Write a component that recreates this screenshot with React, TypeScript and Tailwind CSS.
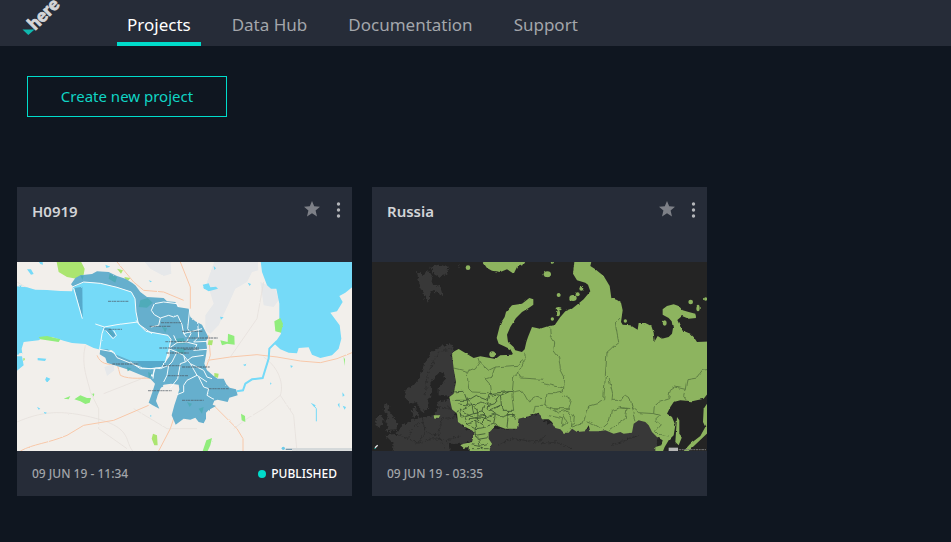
import type { ReactNode } from "react";

type Project = {
  name: string;
  date: string;
  published: boolean;
  map: ReactNode;
};

const navItems = ["Projects", "Data Hub", "Documentation", "Support"];

function Logo() {
  return (
    <svg viewBox="0 0 44 36" className="h-9 w-11 overflow-visible" role="img" aria-label="here">
      <text
        x="15"
        y="31"
        transform="rotate(-45 15 31)"
        fill="#d4d5d7"
        stroke="#d4d5d7"
        strokeWidth="0.8"
        fontSize="18"
        fontWeight="900"
        fontFamily="Lato, sans-serif"
      >
        here
      </text>
      <path d="M2.5 29.5H14.5L8.3 35Z" fill="#10b8ae" />
    </svg>
  );
}

function CityMap() {
  return (
    <svg viewBox="0 0 1005 567" className="block w-full" role="img" aria-label="Map of city districts">
      <defs>
        <filter id="coast" x="0" y="0" width="100%" height="100%">
          <feTurbulence type="fractalNoise" baseFrequency="0.06" numOctaves="2" seed="4" />
          <feDisplacementMap in="SourceGraphic" scale="5" xChannelSelector="R" yChannelSelector="G" />
        </filter>
      </defs>
      <rect width="1005" height="567" fill="#f2efeb" />
      <g filter="url(#coast)">
        <path d="M595 -10H722L724 25 705 30 690 60 655 80 635 125 605 190 580 215 565 205 565 160 590 125 570 60ZM730 60 775 80 785 115 770 135 740 130ZM375 -10H460L463 35 440 42 400 20ZM262 315 290 305 292 325 270 342Z" fill="#e6e8ea" />
        <g fill="none" stroke="#e4deda" strokeWidth="2">
          <path d="M0 480C70 450 130 440 240 470S320 540 350 570M205 250C190 310 215 360 220 390L245 440V500L330 560M0 60 120 130M850 0 800 170M740 285C790 320 800 370 790 400L740 440 690 470 650 500M790 400 830 460 840 570M640 285 720 170 740 60M350 440 450 500 540 500M260 395 400 340" />
        </g>
        <g fill="none" stroke="#f8c8a9" strokeWidth="3">
          <path d="M10 567C50 545 90 545 150 520L200 490 290 475 395 430M240 280C250 305 270 310 300 305L310 340C340 355 380 345 415 350M300 0 350 60 380 85 440 90 500 115M490 0 520 75V140M575 220 580 280 568 315M572 295 640 285 720 278 780 285 850 297 910 302 960 290 1005 272M590 430 660 500 678 530V570M480 440 460 500 425 567" />
        </g>
        <g fill="#75daf8">
          <path d="M-10 72 30 76 55 83 90 84 130 87 165 88 168 74 200 60 250 64 300 76 343 90 354 110 357 150 364 185 387 208 453 220 460 232 456 262 445 300 434 316 400 320 376 318 340 305 300 287 285 265 245 262 230 258 205 246 165 243 140 236 105 225 75 228 65 235 20 240 14 260 16 275-10 280ZM-10 283 15 283 20 310-10 334Z" />
          <path d="M730-10 735 30 750 70 762 80 778 80 787 125 787 175 792 215 772 245 790 262 815 272 840 274 845 258 875 256 885 278 910 288 945 280 965 260 973 230 968 190 940 152 960 148 977 120 967 102 985 92 1015 68V-10Z" />
          <path d="M30 22 42 22 50 36 42 38ZM62 288 88 290 84 297 62 295ZM88 345 100 350 94 358 84 355ZM60 434 70 440 65 443ZM80 449 90 452 84 456ZM62-5 76-5 78 8 70 6ZM557 68 575 64 580 76 597 74 603 80 575 88 562 80ZM395 55 405 58 400 61ZM590 12 597 19 592 24ZM609 164 620 166 612 173ZM692 62 702 66 698 72ZM678 308 690 305 684 313ZM820 310 828 312 822 318ZM759 361 764 365 760 368ZM976 391 983 400 977 404ZM962 428 967 422 968 438ZM977 431 987 435 983 443ZM881 422 896 430 892 436ZM265 8 280 14 268 18ZM400 458 404 462 400 465Z" />
        </g>
        <path d="M780 237 757 260 755 290 744 325 737 348 705 352 685 365 678 385 660 388" fill="none" stroke="#75daf8" strokeWidth="6" />
        <path d="M890 430 898 440V478" fill="none" stroke="#75daf8" strokeWidth="3" />
        <g fill="#abe56f">
          <path d="M118-5H190L203 20 200 38 178 50 150 45 125 30ZM300 20 318 25 312 35ZM322 45 340 48 330 60ZM408 515 420 520 422 550 412 550 404 530ZM575 235 588 235 585 250 572 248ZM592 333 605 335 603 347 592 345ZM18 288 24 292 20 298Z" />
        </g>
        <g fill="#91ed7c">
          <path d="M65 225 90 222 130 232 125 240 70 232ZM172 412 190 400 210 408 222 408 218 422 205 426 190 418ZM224 393 232 395 230 404ZM140 410 160 402 155 412ZM610 235 632 240 633 215 652 222 653 248 630 245 615 250ZM772 178 790 168 798 185 792 212 775 208ZM672 455 684 462 685 480 674 475ZM568 535 585 528 580 550 572 567H557ZM980 285 984 292 982 312Z" />
        </g>
      </g>
      <g filter="url(#coast)">
        <path
          d="M162 67 175 48 190 40 225 36 240 28 275 30 300 42 325 50 345 62 355 70 370 90 390 105 440 108 450 118 475 120 482 135 515 140 520 165 535 178 555 188 565 208 574 225 567 238 570 258 567 280 562 305 570 325 590 342 602 350 620 350 628 367 638 377 657 382 662 400 637 407 632 420 602 413 592 416 587 428 597 432 575 444 567 452 567 470 560 484 545 480 535 467 520 473 500 470 476 488 464 460 472 430 482 400 487 382 485 368 462 365 440 368 430 380 422 400 417 417 427 440 407 430 395 422 407 388 414 365 400 350 370 338 330 322 300 312 270 302 265 287 248 277 250 262 272 262 292 276 342 296 360 297 443 297 435 315 458 282 460 232 453 220 387 208 364 185 357 150 354 110 343 90 300 76 250 64 200 60 170 76Z"
          fill="#66afcd"
        />
        <path d="M171 78 196 74 197 170ZM360 297H443L434 316 400 320 376 316ZM255 195 282 200 297 220 290 228 270 212Z" fill="#56a9cb" />
        <path d="M370 115 392 108 407 122 390 137 365 135ZM278 35 300 45 295 62 275 50ZM435 195 450 198 445 212ZM475 230 500 228 505 245 475 244ZM478 260 505 258 500 275 480 272ZM275 203 290 218 280 216ZM190 40 200 42 196 54ZM510 420 525 425 518 435ZM545 440 560 435 555 455ZM330 315 344 320 332 328ZM393 330 404 335 396 350Z" fill="#50abb9" />
        <g fill="none" stroke="#f4fbfc" strokeWidth="3" strokeLinejoin="round">
          <path d="M168 74 200 60 250 64 300 76 343 90 354 110 357 150 364 185 387 208 453 220 462 232 456 262 445 300 434 316 400 320 376 318 342 304 300 287 290 270 248 262 255 215 262 195 235 186M262 195 300 188 362 180M170 78 196 170M290 205 298 220 288 230 266 205" />
          <path d="M485 135 480 125 440 120 412 125 403 145 412 158 430 168 455 160 470 165 482 160 495 188 500 215 508 225M430 168 425 190 402 195M357 175 370 190 405 215M518 142 512 200 522 215 508 240 480 242 470 220M542 180 545 225 530 240 570 238M508 240 540 248 530 265 570 262M480 242 455 260 480 270 500 280 505 300 490 305 482 350 460 378M500 280 520 305 540 340 570 360M480 270 465 300 455 310 450 340 440 360M455 310 430 320 415 318 405 345M540 340 510 355 500 370 500 390 480 398M545 345 560 375 575 380 570 400 590 412M520 305 560 325 570 345 585 350M500 215 555 200M505 300 525 285 560 280M412 318 408 350M340 300 370 320 412 320" />
        </g>
      </g>
      <g stroke="#4b5661" strokeOpacity="0.55" strokeWidth="4" strokeDasharray="9 2 5 1 7 2">
        <path d="M273 118H334M275 202H315M286 306H365M432 182H495M398 193H462M445 239H515M427 258H545M448 273H515M438 311H492M452 341H515M393 386H464M495 208H558M512 228H603M495 315H578M575 380H635M495 415H560M500 262H545" />
      </g>
      <path d="M825 562H1005" stroke="#d5d9da" strokeWidth="8" />
      <circle cx="799" cy="559" r="5" fill="#6cc9e8" />
      <path d="M806 562H825" stroke="#7799ad" strokeWidth="4" />
    </svg>
  );
}

function CountryMap() {
  return (
    <svg viewBox="0 0 1005 567" className="block w-full" role="img" aria-label="Map of Russian regions">
      <defs>
        <filter id="shore" x="0" y="0" width="100%" height="100%">
          <feTurbulence type="fractalNoise" baseFrequency="0.06" numOctaves="2" seed="9" />
          <feDisplacementMap in="SourceGraphic" scale="7" xChannelSelector="R" yChannelSelector="G" />
        </filter>
        <filter id="border" x="0" y="0" width="100%" height="100%">
          <feTurbulence type="fractalNoise" baseFrequency="0.05" numOctaves="1" seed="5" />
          <feDisplacementMap in="SourceGraphic" scale="16" xChannelSelector="R" yChannelSelector="G" />
        </filter>
        <filter id="fjord" x="0" y="0" width="100%" height="100%">
          <feTurbulence type="fractalNoise" baseFrequency="0.12" numOctaves="2" seed="2" />
          <feDisplacementMap in="SourceGraphic" scale="16" xChannelSelector="R" yChannelSelector="G" />
        </filter>
      </defs>
      <rect width="1005" height="567" fill="#242424" />
      <g fill="#393939" filter="url(#fjord)">
        <path d="M135 30 155 40 170 25 182 45 178 65 205 75 212 100 190 90 178 85 168 122 155 100 145 75ZM175 15 200 8 230 15 225 35 200 45 185 35ZM258 12 266 10 262 18Z" />
        <path d="M245 250 225 245 200 258 175 275 155 310 145 345 125 370 100 385 102 410 120 425 135 420 150 450 168 440 170 415 180 390 175 365 195 335 215 330 220 350 200 380 200 400 235 405 250 380 250 340 240 290Z" />
        <path d="M38 425 52 430 50 445 65 465 78 490 72 505 42 508 50 495 40 480 48 465 35 445ZM12 465 30 460 35 480 22 495 10 490ZM118 435 132 435 138 460 125 465Z" />
        <path d="M60 580 65 545 40 520 75 515 90 490 120 475 150 465 185 460 200 440 195 420 235 410 250 460 280 500 310 510 305 535 270 545 230 545 235 580ZM345 520 360 500 430 500 440 470 500 455 520 480 560 495 700 500 800 470 860 500 850 580H345ZM140 550 160 545 200 560V580H145Z" />
      </g>
      <g fill="none" stroke="#292929" strokeWidth="2" filter="url(#fjord)">
        <path d="M160 400 165 340 200 270 240 260M75 515 110 530 120 500 150 480M110 530 140 545 180 530 220 535 270 520M150 465 160 510 200 520 210 470 250 465M160 510 140 545M200 520 220 560M380 550 420 530 500 540 520 520M510 545 550 540 600 560M720 550 800 520" />
        <path d="M200 435 250 440" />
      </g>
      <g filter="url(#shore)">
        <g fill="#8db45e">
          <path d="M240 278 247 268 260 261 275 270 305 288 325 283 350 287 370 291 385 280 420 278 430 265 450 270 458 262 463 240 468 225 480 195 504 200 530 192 548 190 565 165 580 148 600 140 615 128 635 112 655 88 648 68 640 62 615 55 603 35 606 10 608-10H660L655 12 670 22 695 42 713 72 718 108 735 114 747 122 752 145 747 180 752 188 775 190 797 203 800 183 820 183 838 192 845 212 848 238 857 222 870 230 890 225 900 215 903 198 899 178 890 168 872 158 872 142 885 132 905 127 920 132 932 145 950 150 970 155 972 168 950 170 930 162 916 174 930 205 955 215 965 225 975 240 1015 238V385L995 410 960 418 925 415 905 420 895 435 885 455 900 465 910 490 905 520 890 535 878 555 870 575H850L850 555 868 550 872 535 855 525 840 510 830 490 820 480 800 475 785 485 780 512 755 515 745 510 725 515 700 505 680 508 655 508 650 490 640 508 615 510 600 500 590 512 575 512 565 502 550 498 540 480 530 472 510 472 500 452 470 463 440 470 435 500 400 500 370 490 350 510 350 530 360 545 353 560 355 580H290L290 555 275 558 265 550 275 545 300 540 308 510 275 492 258 480 255 455 240 442 232 405 245 395 252 360 245 320Z" />
          <path d="M325-10H465L455 8 435 15 425 35 405 22 385 30 360 26 345 18ZM472 108 484 112 484 128 470 138 450 150 432 168 415 195 405 218 408 240 425 255 432 270 425 280 415 262 395 252 380 245 374 228 385 185 398 165 402 150 420 130 450 125ZM185 460 205 460 200 468 186 466Z" />
          <path d="M915 465 922 475 922 515 930 525 920 550 910 540ZM1005 425 995 440 993 480 1000 495 985 522 955 545 935 567 950 567 1010 510Z" />
        </g>
        <g fill="#8db45e">
          <circle cx="288" cy="17" r="7" /><circle cx="361" cy="277" r="9" /><ellipse cx="526" cy="37" rx="11" ry="9" />
          <circle cx="560" cy="99" r="6" /><ellipse cx="603" cy="108" rx="11" ry="9" /><circle cx="617" cy="97" r="6" /><circle cx="628" cy="80" r="6" />
          <ellipse cx="558" cy="153" rx="6" ry="10" /><ellipse cx="560" cy="140" rx="9" ry="5" /><circle cx="541" cy="171" r="5" /><circle cx="760" cy="177" r="5" />
          <ellipse cx="878" cy="183" rx="6" ry="8" /><circle cx="956" cy="120" r="7" /><ellipse cx="978" cy="138" rx="5" ry="10" /><circle cx="1001" cy="111" r="5" /><circle cx="541" cy="0" r="5" />
        </g>
      </g>
      <g fill="none" stroke="#55743f" strokeWidth="2.5" strokeLinejoin="round" filter="url(#border)">
        <path d="M245 318 285 328 310 318 322 300 318 288M322 300 350 325 370 315 435 310 460 290 458 270M285 328 290 380 300 390 350 392M370 315 360 345 342 350 355 365 360 400M460 290 440 330 425 345 420 400 425 445M440 330 445 348 510 352M504 362 530 368 575 378M533 195 535 220 548 240 545 265 560 285 565 320 578 345 574 390M744 165 730 180 735 215 740 240 705 270 700 340 712 352 722 395 720 415 740 415 760 400 775 410 780 435 800 452 848 455 850 430 865 418 890 410 895 385 910 375 940 382 945 350 975 345 990 325 1010 322M940 382 935 400 945 415M780 435 792 475M700 345 695 410 675 425 650 432 640 470 630 485 600 495M640 475 665 485 690 500 712 480 718 445 745 437 775 440M745 437 765 440 760 470 730 490 712 503M848 455 865 460 850 475 865 488 850 505 865 520 890 525M574 390 550 395 525 395 518 430 545 440 590 440 598 415 574 400M518 430 490 430 485 455M545 440 560 450 582 445 598 465 595 500M574 460 585 480 570 490M525 460 575 470 570 495M598 458 610 465 608 485 595 490M425 390 450 385 470 420 490 405 510 410" />
        <path
          stroke="#3b5331"
          d="M238 390 275 388 285 415 310 400 350 415 355 395 385 400 390 445M240 415 285 415 280 440 250 450M285 415 300 430 330 420 350 430 365 425 380 405M280 440 300 430 305 455 275 465 262 455M305 455 330 450 335 430M330 450 345 465 370 455 390 465 420 455 430 470M275 465 285 485 310 475 325 485 345 465M310 475 315 500 340 495 325 485M340 495 370 485 385 495M285 485 315 500M350 415 345 440 370 455M300 430 315 440 320 475M350 445 385 430M370 455 365 485M410 445 405 495M275 450 300 465 340 460M290 470 330 465 360 475M355 395 420 388M360 400 375 420M310 520 340 515M312 505 315 535 345 530M300 545 325 550 350 545M320 535 330 565M300 560 350 560M385 400 410 390M410 460 425 455 420 465M255 425 290 430M265 440 270 470M390 445 425 445M385 430 370 440"
        />
      </g>
      <path d="M9 557 17 550" stroke="#eee" strokeWidth="4" />
      <path d="M6 558 12 558 9 562Z" fill="#10b8ae" />
      <rect x="890" y="557" width="28" height="10" fill="#b6b6b6" />
      <path d="M920 563H1002" stroke="#777" strokeWidth="3" strokeDasharray="8 2 5 2" />
    </svg>
  );
}

const projects: Project[] = [
  { name: "H0919", date: "09 JUN 19 - 11:34", published: true, map: <CityMap /> },
  { name: "Russia", date: "09 JUN 19 - 03:35", published: false, map: <CountryMap /> },
];

function ProjectCard({ name, date, published, map }: Project) {
  return (
    <article className="w-[335px] bg-[#262c38]">
      <header className="flex h-[75px] items-start pt-3 pr-1.5 pl-[15px]">
        <h2 className="grow text-[15px] leading-6 font-semibold text-[#d2d4d7]">{name}</h2>
        <button type="button" aria-label={`Favourite ${name}`} className="mt-0.5 text-[#7d8087]">
          <svg viewBox="0 0 16 16" className="size-4" fill="currentColor">
            <path d="M8 0 10.2 5.3 16 5.8 11.6 9.6 13 15.4 8 12.3 3 15.4 4.4 9.6 0 5.8 5.8 5.3Z" />
          </svg>
        </button>
        <button type="button" aria-label={`Options for ${name}`} className="mt-0.5 ml-2.5 text-[#b4b6ba]">
          <svg viewBox="0 0 16 18" className="h-[18px] w-4" fill="currentColor">
            <circle cx="8.5" cy="3" r="1.7" />
            <circle cx="8.5" cy="9" r="1.7" />
            <circle cx="8.5" cy="15" r="1.7" />
          </svg>
        </button>
      </header>
      {map}
      <footer className="flex h-[45px] items-center justify-between px-[15px] text-xs font-medium">
        <time className="text-[#a2a5aa]">{date}</time>
        {published && (
          <span className="flex items-center gap-[5px] text-white">
            <span className="size-2 rounded-full bg-[#00dccb]" />
            PUBLISHED
          </span>
        )}
      </footer>
    </article>
  );
}

export default function App() {
  return (
    <div className="min-h-screen bg-[#0f1620] font-['Noto_Sans',sans-serif]">
      <header className="flex h-[46px] bg-[#262c38] pl-5">
        <a href="#home" className="w-[97px]">
          <Logo />
        </a>
        <nav className="flex gap-[21px]">
          {navItems.map((item, i) => (
            <a
              key={item}
              href={`#${item}`}
              aria-current={i === 0 ? "page" : undefined}
              className={`border-b-4 px-2.5 pt-3 text-[17px] leading-[26px] whitespace-nowrap ${
                i === 0 ? "border-[#00dccb] text-white" : "border-transparent text-[#a3a6ab]"
              }`}
            >
              {item}
            </a>
          ))}
        </nav>
      </header>
      <main className="px-[17px] pt-[30px] pb-[46px]">
        <button
          type="button"
          className="ml-2.5 h-[41px] w-[200px] border border-[#00dccb] text-[15px] text-[#10d4c5]"
        >
          Create new project
        </button>
        <section aria-label="Projects" className="mt-[70px] flex flex-wrap gap-5">
          {projects.map((project) => (
            <ProjectCard key={project.name} {...project} />
          ))}
        </section>
      </main>
    </div>
  );
}
